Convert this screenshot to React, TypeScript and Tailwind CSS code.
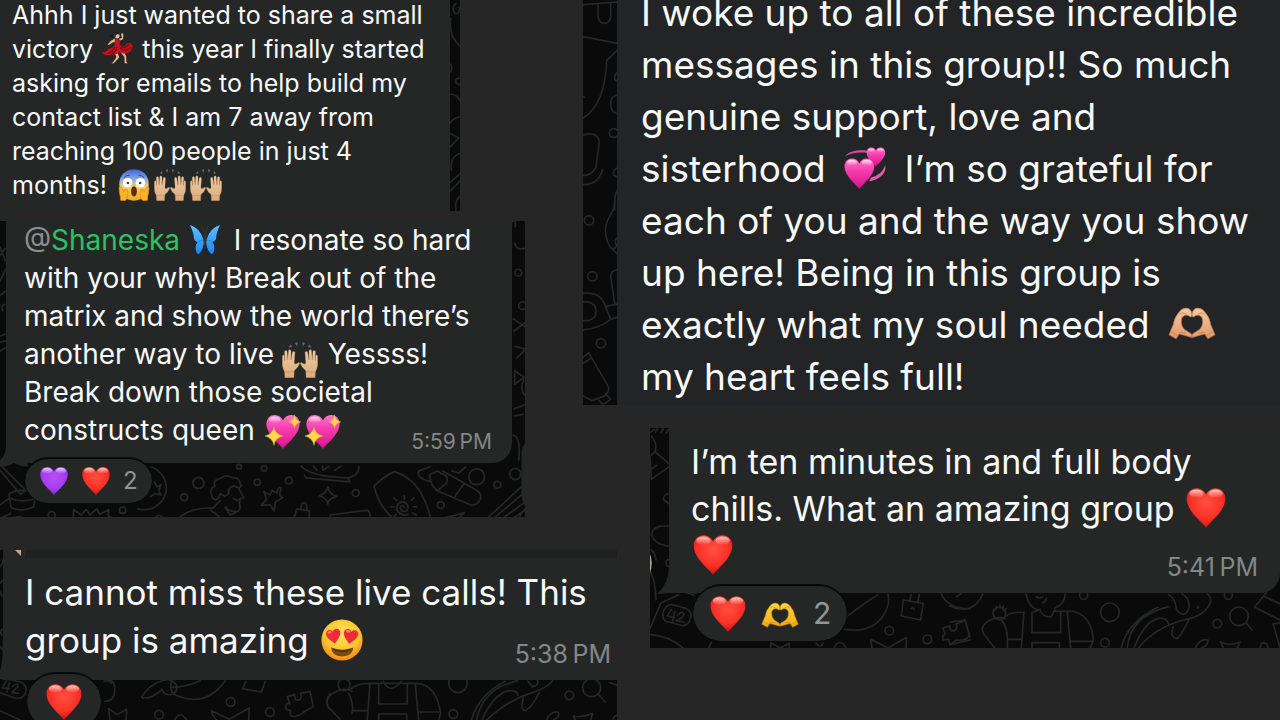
import type { ReactNode } from "react"
import { clsx } from "clsx"

type IconProps = { className?: string }

// Gradients shared by every emoji on the page
function Gradients() {
  return (
    <svg className="absolute h-0 w-0" aria-hidden="true">
      <defs>
        <radialGradient id="red" cx="50%" cy="35%" r="70%">
          <stop offset="0" stopColor="#ff5140" />
          <stop offset=".6" stopColor="#fb3026" />
          <stop offset="1" stopColor="#c90f12" />
        </radialGradient>
        <radialGradient id="purple" cx="50%" cy="35%" r="70%">
          <stop offset="0" stopColor="#b650f5" />
          <stop offset=".6" stopColor="#a63df0" />
          <stop offset="1" stopColor="#7d22cf" />
        </radialGradient>
        <linearGradient id="pink" x1="0" y1="0" x2="0" y2="1">
          <stop offset="0" stopColor="#ff78c6" />
          <stop offset=".4" stopColor="#f73db0" />
          <stop offset="1" stopColor="#d8128a" />
        </linearGradient>
        <linearGradient id="shine" x1="0" y1="0" x2="0" y2="1">
          <stop offset="0" stopColor="#fff" stopOpacity=".75" />
          <stop offset="1" stopColor="#fff" stopOpacity="0" />
        </linearGradient>
        <radialGradient id="face" cx="50%" cy="35%" r="65%">
          <stop offset="0" stopColor="#ffe65c" />
          <stop offset=".65" stopColor="#ffc32e" />
          <stop offset="1" stopColor="#f08a14" />
        </radialGradient>
        <linearGradient id="scream" x1="0" y1="0" x2="0" y2="1">
          <stop offset="0" stopColor="#3d63d8" />
          <stop offset=".3" stopColor="#87a4e6" />
          <stop offset=".55" stopColor="#f5cf62" />
          <stop offset="1" stopColor="#f7a51c" />
        </linearGradient>
        <linearGradient id="skin" x1="0" y1="0" x2="0" y2="1">
          <stop offset="0" stopColor="#efcfa6" />
          <stop offset="1" stopColor="#d9aa7c" />
        </linearGradient>
        <linearGradient id="peach" x1="0" y1="0" x2="0" y2="1">
          <stop offset="0" stopColor="#f6c9a2" />
          <stop offset="1" stopColor="#e29a68" />
        </linearGradient>
        <linearGradient id="gold" x1="0" y1="0" x2="0" y2="1">
          <stop offset="0" stopColor="#ffd63e" />
          <stop offset="1" stopColor="#f3a916" />
        </linearGradient>
        <linearGradient id="wing" x1="0" y1="0" x2="0" y2="1">
          <stop offset="0" stopColor="#63c3ff" />
          <stop offset="1" stopColor="#1a83ea" />
        </linearGradient>
      </defs>
    </svg>
  )
}

const HEART = "M50 97C42 84 4 58 4 28C4 12 15 3 27 3C38 3 46 9 50 18C54 9 62 3 73 3C85 3 96 12 96 28C96 58 58 84 50 97Z"

function Emoji({ className, label, box = "0 0 100 100", children }: IconProps & { label: string; box?: string; children: ReactNode }) {
  return (
    <svg viewBox={box} role="img" aria-label={label} className={clsx("inline-block shrink-0", className)}>
      {children}
    </svg>
  )
}

function RedHeart({ className }: IconProps) {
  return (
    <Emoji label="red heart" className={className}>
      <path d={HEART} fill="url(#red)" />
      <ellipse cx="27" cy="16" rx="17" ry="10" fill="url(#shine)" />
      <ellipse cx="73" cy="16" rx="17" ry="10" fill="url(#shine)" />
    </Emoji>
  )
}

function PurpleHeart({ className }: IconProps) {
  return (
    <Emoji label="purple heart" className={className}>
      <path d={HEART} fill="url(#purple)" />
      <ellipse cx="27" cy="16" rx="17" ry="10" fill="url(#shine)" />
      <ellipse cx="73" cy="16" rx="17" ry="10" fill="url(#shine)" />
    </Emoji>
  )
}

function SparklingHeart({ className }: IconProps) {
  return (
    <Emoji label="sparkling heart" className={className}>
      <path d={HEART} fill="url(#pink)" />
      <ellipse cx="27" cy="16" rx="16" ry="9" fill="url(#shine)" />
      <path d="M25 37Q28 56 50 61Q28 66 25 87Q21 66 0 61Q21 56 25 37Z" fill="#ffd84a" stroke="#e8a22c" strokeWidth="1.5" />
      <path d="M82 3Q84 18 99 22Q84 26 82 40Q80 26 66 22Q80 18 82 3Z" fill="#ffd84a" stroke="#e8a22c" strokeWidth="1.5" />
    </Emoji>
  )
}

function RevolvingHearts({ className }: IconProps) {
  return (
    <Emoji label="revolving hearts" className={className}>
      <path d="M3 22C12 9 35 6 57 9L56 14C34 11 16 14 3 22Z" fill="#d9499f" />
      <path d="M98 43C103 60 86 78 60 82L64 73C82 68 94 58 98 43Z" fill="#e45cb0" />
      <g transform="translate(52 0) scale(.48)">
        <path d={HEART} fill="url(#pink)" />
        <ellipse cx="27" cy="16" rx="16" ry="9" fill="url(#shine)" />
        <ellipse cx="73" cy="16" rx="16" ry="9" fill="url(#shine)" />
      </g>
      <g transform="translate(-2 25) scale(.77)">
        <path d={HEART} fill="url(#pink)" stroke="#b9157c" strokeWidth="1" />
        <ellipse cx="27" cy="16" rx="16" ry="9" fill="url(#shine)" />
        <ellipse cx="73" cy="16" rx="16" ry="9" fill="url(#shine)" />
      </g>
    </Emoji>
  )
}

function HeartEyes({ className }: IconProps) {
  return (
    <Emoji label="smiling face with heart eyes" className={className}>
      <circle cx="50" cy="50" r="49" fill="url(#face)" />
      <path d="M24 68Q50 78 77 68Q76 89 50 89Q25 89 24 68Z" fill="#7a4a12" />
      <path d="M28 71Q50 80 73 71Q72 77 50 79Q29 77 28 71Z" fill="#4d2b08" />
      <g transform="translate(9 27) rotate(-10) scale(.37)">
        <path d={HEART} fill="#ee2b38" />
        <ellipse cx="28" cy="18" rx="14" ry="8" fill="#ff7f7f" />
      </g>
      <g transform="translate(55 21) rotate(10) scale(.37)">
        <path d={HEART} fill="#ee2b38" />
        <ellipse cx="28" cy="18" rx="14" ry="8" fill="#ff7f7f" />
      </g>
    </Emoji>
  )
}

function ScreamFace({ className }: IconProps) {
  return (
    <Emoji label="face screaming in fear" className={className}>
      <path d="M50 1C76 1 96 20 96 47C96 75 80 99 50 99C20 99 4 75 4 47C4 20 24 1 50 1Z" fill="url(#scream)" />
      <path d="M18 27Q26 18 36 20M64 20Q74 18 82 27" fill="none" stroke="#34478c" strokeWidth="3" />
      <circle cx="30" cy="43" r="15" fill="#fff" />
      <circle cx="70" cy="43" r="15" fill="#fff" />
      <circle cx="31" cy="44" r="4" fill="#5c3a1a" />
      <circle cx="69" cy="44" r="4" fill="#5c3a1a" />
      <path d="M50 54C62 54 62 86 50 86C38 86 38 54 50 54Z" fill="#5e2d0c" />
      <path d="M3 58Q10 52 14 62L18 72Q22 59 28 63Q34 72 30 84Q29 98 18 99L8 98Q8 84 5 77Z" fill="#f9b52a" stroke="#d98212" strokeWidth="2" />
      <path d="M97 58Q90 52 86 62L82 72Q78 59 72 63Q66 72 70 84Q71 98 82 99L92 98Q92 84 95 77Z" fill="#f9b52a" stroke="#d98212" strokeWidth="2" />
    </Emoji>
  )
}

const RAISED_HAND =
  "M8 99L7 83Q0 69 1 60L1 40Q2 35 6 37L8 52L7 27Q10 21 14 26L16 49L18 24Q21 18 25 24L25 50L29 28Q33 23 36 29L34 57Q36 65 42 59Q49 54 49 60Q45 72 34 80L33 99Z"

function RaisedHands({ className }: IconProps) {
  return (
    <Emoji label="raising hands" className={className}>
      <path d={RAISED_HAND} fill="url(#skin)" stroke="#a97e55" strokeWidth="1" />
      <path d={RAISED_HAND} transform="matrix(-1 0 0 1 100 0)" fill="url(#skin)" stroke="#a97e55" strokeWidth="1" />
      <path d="M8 83H33M67 83H92M8 52V42M16 50V38M25 50V38M92 52V42M84 50V38M75 50V38" stroke="#b98d62" strokeWidth="1.5" />
      <path d="M17 15L25 6L27 14ZM36 3L44 1L42 12ZM64 3L56 1L58 12ZM83 15L75 6L73 14Z" fill="#686b69" />
    </Emoji>
  )
}

const HALF_HEART_HAND =
  "M2 82L17 91Q21 85 23 80Q35 83 49 88Q52 80 45 77L35 70Q27 62 28 48Q29 35 42 37Q50 45 50 35Q49 21 38 20Q28 20 22 31Q13 42 11 58Z"

function HeartHands({ className, tone }: IconProps & { tone: "peach" | "gold" }) {
  const fill = tone === "peach" ? "url(#peach)" : "url(#gold)"
  const line = tone === "peach" ? "#b97346" : "#c27c0c"
  return (
    <Emoji label="heart hands" className={className}>
      <g transform="translate(0 3) scale(1 .9)">
        <path d={HALF_HEART_HAND} fill={fill} stroke={line} strokeWidth="1.5" />
        <path d={HALF_HEART_HAND} transform="matrix(-1 0 0 1 100 0)" fill={fill} stroke={line} strokeWidth="1.5" />
        <path d="M24 34Q30 28 38 34M76 34Q70 28 62 34M7 75L21 84M93 75L79 84M24 76L37 78M76 76L63 78" fill="none" stroke={line} strokeWidth="1.5" />
      </g>
    </Emoji>
  )
}

function Butterfly({ className }: IconProps) {
  return (
    <Emoji label="butterfly" className={className}>
      <path d="M46 46C40 24 22 9 3 3C7 14 15 27 15 40C15 50 20 55 26 57C17 66 20 86 29 94C39 92 47 72 48 58Z" fill="url(#wing)" stroke="#14263e" strokeWidth="3" />
      <path d="M54 46C60 24 78 9 97 3C93 14 85 27 85 40C85 50 80 55 74 57C83 66 80 86 71 94C61 92 53 72 52 58Z" fill="url(#wing)" stroke="#14263e" strokeWidth="3" />
      <path d="M49 40Q47 18 39 8M51 40Q53 18 61 8" fill="none" stroke="#444" strokeWidth="1.5" />
      <path d="M46 50L28 54M54 50L72 54" stroke="#2379c4" strokeWidth="2" />
      <path d="M50 34Q57 48 50 76Q43 48 50 34Z" fill="#3a3534" />
    </Emoji>
  )
}

function Dancer({ className }: IconProps) {
  return (
    <Emoji label="woman dancing" className={className}>
      <path d="M40 9C34 4 24 10 24 16C30 14 36 18 43 18Z" fill="#231814" />
      <path d="M43 20L30 28L21 39L25 41L36 33L47 31ZM58 27L69 23L70 8L66 2L63 7L65 19L56 22Z" fill="#e2b48b" />
      <circle cx="50" cy="12" r="8" fill="#e8bd95" />
      <path d="M42 15Q41 2 51 2Q59 3 57 8Q50 6 46 10L46 17Z" fill="#231814" />
      <path d="M43 66L48 79L39 92L33 99L41 97L57 80L52 64ZM60 62L73 78L74 98L83 98L79 92L79 76L70 59Z" fill="#e2b48b" />
      <path d="M43 23L58 23L59 39L63 46Q75 45 84 34Q92 32 99 43Q98 60 83 66Q71 69 60 63Q49 72 31 70Q17 78 1 64Q14 65 22 54Q34 52 43 43Z" fill="#c9101d" />
      <path d="M63 46Q78 52 88 38M60 49Q75 64 95 48M43 47Q37 63 20 68M50 47Q48 60 34 68" fill="none" stroke="#7f0711" strokeWidth="4" />
    </Emoji>
  )
}

// Line art behind the chat bubbles
function Doodles({ children }: { children: ReactNode }) {
  return (
    <svg aria-hidden="true" className="pointer-events-none absolute inset-0 h-full w-full" fill="none" stroke="#262727" strokeWidth="5" strokeLinecap="round" strokeLinejoin="round">
      {children}
    </svg>
  )
}

function VictoryDoodles() {
  return (
    <Doodles>
      <g transform="scale(.3333)">
        <path d="M1368 10Q1352 24 1365 40Q1380 44 1378 22M1352 55Q1346 110 1380 138M1350 192Q1360 200 1352 216M1350 282Q1372 284 1380 302M1382 350Q1362 352 1350 370M1350 400L1376 414L1350 442M1382 460Q1350 468 1354 510M1350 548L1382 520M1352 572L1384 540M1384 588Q1364 594 1368 632" />
        <circle cx="1376" cy="244" r="9" />
      </g>
    </Doodles>
  )
}

function ResonateDoodles() {
  return (
    <Doodles>
      <g transform="translate(0 -11) scale(.3444)">
        <path d="M0 108L16 148M0 132L14 112M0 206L18 170M0 248L16 236M14 274Q2 276 8 292M0 366L18 360M0 384L18 380M0 410L16 400M1484 36Q1500 24 1496 48M1494 96Q1500 120 1526 110M1490 316L1526 340M1492 352L1526 326M1496 396L1526 404L1500 430M1494 466L1522 486L1494 506Z" />
        <circle cx="1505" cy="182" r="10" />
        <circle cx="1517" cy="278" r="11" />
      </g>
      <g transform="translate(0 159) scale(.3444)">
        <path d="M0 246L75 320L60 332L0 262" />
        <path d="M26 330Q64 310 104 332L98 368Q64 386 32 370ZM30 344Q64 358 102 344M0 362L26 344M36 400L60 396L78 410M0 402L30 388" />
        <circle cx="150" cy="392" r="10" />
        <circle cx="356" cy="378" r="9" />
        <path d="M212 408L214 376L236 392L250 376L262 392L280 374L290 390L316 376L314 394L340 408" />
        <path d="M438 252A62 62 0 1 1 400 374" />
        <path d="M448 296L456 310L468 304L460 322L468 334L450 330L438 338" />
        <circle cx="462" cy="408" r="14" />
        <circle cx="535" cy="340" r="10" />
        <circle cx="576" cy="299" r="16" />
        <path d="M616 340Q606 314 624 308Q618 288 640 286Q654 272 674 284Q696 282 698 302Q704 308 694 314L680 308Q662 308 664 330L652 338L640 330L634 344Q622 352 616 340ZM694 316L708 342L694 346Q700 352 694 358Q702 372 690 382Q664 384 654 368M678 344L690 350M640 350L618 372Q550 368 508 410M612 378Q634 392 648 410M654 370L668 392L682 386M718 408Q758 392 800 408" />
        <circle cx="694" cy="252" r="7" />
        <circle cx="747" cy="297" r="9" />
        <circle cx="767" cy="256" r="8" />
        <circle cx="839" cy="292" r="10" />
        <path d="M790 320L804 328Q808 306 816 314L812 334L820 342L800 354L796 380L784 362L758 364L774 346L766 324L784 334Z" />
        <path d="M952 310Q956 332 978 338Q956 342 952 360Q948 342 928 336Q948 330 952 310Z" />
        <path d="M862 374L898 380L898 408M862 374L852 406M874 374Q874 356 884 356Q894 360 890 378M874 250Q900 280 1010 284L1016 296L888 284L884 276M910 250L920 262M936 250L938 262L956 250M972 262L990 250M1010 284Q1044 276 1042 252M958 408L960 392L1068 378Q1078 386 1072 408" />
        <circle cx="1033" cy="328" r="10" />
        <path d="M1086 308Q1112 282 1144 266Q1198 282 1224 332Q1248 374 1250 410M1086 308Q1102 374 1150 408M1174 370Q1168 360 1162 370Q1164 386 1180 380Q1192 362 1172 354Q1150 354 1152 376Q1162 396 1186 390" />
        <path d="M1174 346V336M1194 350L1202 342M1202 368H1210M1198 386L1208 392M1174 402V410M1150 390L1144 398M1144 368H1134M1152 350L1144 342" />
        <path d="M1216 264L1250 252M1216 264Q1208 286 1252 296M1252 296Q1240 270 1260 270Q1270 258 1280 272Q1306 276 1296 300L1272 320Q1254 312 1252 296ZM1286 264L1384 320Q1406 336 1388 356Q1376 368 1360 360L1266 320M1348 300L1320 340M1312 264L1332 270L1352 252" />
        <circle cx="1384" cy="281" r="23" />
        <circle cx="1444" cy="304" r="10" />
        <circle cx="1496" cy="273" r="16" />
        <circle cx="1280" cy="363" r="10" />
        <path d="M1290 400L1348 386L1322 410ZM1408 408L1516 308M1426 408L1516 332M1450 408L1520 358M1480 408L1524 378M1524 374L1500 410M1492 84L1524 72M1494 104L1518 100M1490 160Q1514 168 1506 232M1520 0Q1508 30 1526 46" />
        <path d="M1528 182Q1514 190 1514 220V320Q1512 350 1528 372Z" fill="#252727" stroke="none" />
        <path d="M18 150V190Q16 222 0 232V252Q30 250 40 240Q55 250 80 252V150Z" fill="#242726" stroke="none" />
      </g>
    </Doodles>
  )
}

function LiveCallDoodles() {
  return (
    <Doodles>
      <g transform="translate(0 -10) scale(.3333)">
        <path d="M0 80Q10 70 8 60M0 130L8 120M0 156L8 170M6 268Q-2 276 6 286M0 318L8 330" />
        <path d="M16 416L62 426Q84 438 76 460Q66 480 44 474L0 458M20 422L6 444L28 446M28 428L20 456M38 440Q54 424 54 440L36 458L56 460M0 512L60 540" />
        <path d="M312 424Q346 412 344 450Q344 484 314 484M298 412Q330 420 334 430" />
        <path d="M326 506L330 540M326 506L352 524L380 508L378 540M426 470Q446 436 482 424Q512 410 530 436Q534 456 514 464Q490 466 486 448Q458 476 428 474ZM516 420Q508 440 518 460M516 460Q612 510 676 422M518 442Q562 440 600 422" />
        <path d="M738 424L728 446L784 456L796 424" />
        <circle cx="692" cy="486" r="13" />
        <circle cx="477" cy="524" r="13" />
        <circle cx="810" cy="516" r="13" />
        <path d="M524 540Q540 510 560 540M634 512Q636 526 650 540M634 512L688 538L748 504L746 540" />
        <path d="M862 470L884 464Q882 484 898 480Q908 472 902 460L930 454L940 500L926 508L914 514Q904 526 882 530Q866 530 872 512Q852 510 858 494Q866 486 870 492ZM990 460Q974 482 986 506" />
      </g>
      <g transform="translate(320 -10) scale(.3333)">
        <circle cx="72" cy="434" r="18" />
        <path d="M96 454Q72 440 42 458Q14 474 24 500L60 538M86 460Q102 490 96 520M90 448Q110 430 150 430H290Q350 434 362 520L356 540M150 432L142 540M286 432L296 540M176 432V492H262V432M190 424Q210 466 244 424M176 540V522H260V540M100 512H142M294 516H362" />
        <circle cx="414" cy="430" r="28" />
        <circle cx="400" cy="522" r="13" />
        <path d="M454 540Q478 462 556 424M470 540Q480 474 544 438L592 422M486 540Q512 478 552 456Q590 444 594 466M500 540Q560 484 620 464Q684 444 698 422M624 424Q642 446 638 440Q658 436 652 422M610 474Q600 510 616 512Q638 500 658 458" />
        <circle cx="748" cy="466" r="13" />
        <circle cx="815" cy="443" r="27" />
        <path d="M834 462L856 486M868 428L892 436M680 540Q690 514 714 516Q724 528 700 540M760 528Q790 534 818 520L812 540M760 528L766 540M878 540Q882 524 896 526" />
      </g>
      <g transform="translate(0 -10) scale(.3333)">
        <path d="M8 300V340Q6 380 0 392V418Q26 418 40 410Q55 420 80 421V300Z" fill="#242726" stroke="none" />
      </g>
    </Doodles>
  )
}

function GratefulDoodles() {
  return (
    <Doodles>
      <g transform="translate(-13 0) scale(.3333)">
        <path d="M40 14L142 6M84 12V50Q88 72 106 70Q122 66 122 48V10M40 110L142 130M142 150L110 182Q106 310 40 354M142 284Q120 290 122 316Q124 336 142 342M40 404Q84 394 88 426L78 500Q66 528 40 526M98 508Q86 554 40 554M142 570Q132 590 134 630M38 290L44 292" />
        <path d="M142 218Q134 222 134 232T142 244M142 504Q130 508 130 518T142 530" />
        <circle cx="131" cy="399" r="13" />
      </g>
      <g transform="translate(-13 200) scale(.3333)">
        <circle cx="57" cy="61" r="14" />
        <circle cx="67" cy="229" r="14" />
        <circle cx="93" cy="430" r="14" />
        <path d="M134 0Q136 22 122 44Q92 90 120 140L142 162M142 112Q130 124 142 138M130 148L142 136M142 210Q122 212 122 228L134 310M40 280Q92 274 106 318L122 358Q90 384 40 390M106 320L142 312M122 358L142 352" />
        <path d="M40 306Q78 304 78 334T40 362M40 472L56 458L116 562Q118 586 92 592L66 602L40 588M40 490L64 474M106 580L122 598L100 614L86 600" />
      </g>
    </Doodles>
  )
}

function ChillsDoodles() {
  return (
    <Doodles>
      <g transform="translate(-10 -8) scale(.3333)">
        <path d="M30 38L44 28M46 38L52 26M62 38L70 26M78 40L86 28M34 48Q54 72 44 96L30 108M46 96L88 132M30 110L34 178L88 140M88 220Q66 226 72 240L88 252M30 150L50 136M88 318Q40 314 36 340Q34 358 60 372L88 380M88 418Q76 420 78 430T88 440M30 452Q46 480 48 540M34 390Q46 400 48 420" />
        <path d="M72 570Q84 548 104 556L140 566Q158 578 152 594Q144 622 122 616L78 604Q62 594 72 570ZM94 568L82 588L104 592M104 574L98 604M112 586Q126 570 132 582Q132 592 108 602L132 606M30 626L62 550L116 524M30 644Q90 648 128 684M206 684L214 668M124 512L162 526" />
        <path d="M614 628Q690 640 728 590Q752 556 744 522M620 590L680 546L714 524" />
        <path d="M790 540L850 550L842 600L784 588ZM808 542L814 524M834 546L838 524M814 566Q818 560 822 568M904 522Q924 566 990 566M392 684V668L420 684L448 670V684M528 670Q540 686 550 670M582 684Q600 650 618 684M692 658L696 684M692 658L744 684M744 684L800 652L798 684" />
        <circle cx="748" cy="632" r="13" />
        <circle cx="862" cy="658" r="13" />
        <path d="M908 624L930 618Q928 636 944 632Q954 624 948 612L976 602L990 650M908 624L916 642Q904 648 910 660L926 658L930 674L990 660" />
        <path d="M28 396Q42 428 28 466Z" fill="#b9ad96" stroke="none" />
        <path d="M87 420V440Q86 490 52 522Q90 522 118 507Q134 520 170 522V420Z" fill="#242726" stroke="none" />
      </g>
      <g transform="translate(300 -8) scale(.3333)">
        <path d="M0 558Q70 588 98 522M20 530L34 520M0 606L38 602L44 598L58 646Q50 664 20 660L0 674" />
        <circle cx="148" cy="580" r="19" />
        <path d="M140 560L136 570M150 556V564M160 558L158 566M168 566L162 572M166 596Q138 586 108 608Q88 624 104 646L134 684M156 602Q176 626 172 684M168 588Q182 576 222 576M222 576L214 684M228 522Q240 570 270 570Q280 594 304 590L316 564Q344 552 346 522M258 530Q268 538 278 530M288 534Q290 544 278 548M246 578V638H332V578M246 684V668H328V684M316 574H370Q428 590 430 664L420 684M352 574L362 684M172 658H214M362 664H430M270 568L246 578" />
        <circle cx="401" cy="526" r="12" />
        <circle cx="480" cy="577" r="28" />
        <circle cx="465" cy="668" r="13" />
        <path d="M514 684Q532 606 624 562M532 684Q540 588 656 560M552 684Q584 606 622 596Q648 590 656 612M566 684Q610 626 700 600Q770 588 782 544Q782 524 770 522M656 524Q676 534 680 570Q706 600 718 560Q716 530 696 522M670 620Q658 654 682 656Q700 636 716 600" />
        <circle cx="744" cy="562" r="2" />
        <circle cx="835" cy="526" r="12" />
        <circle cx="802" cy="611" r="13" />
        <circle cx="867" cy="589" r="28" />
        <path d="M888 608L906 630M950 516L914 562L990 600M946 530L990 552M970 612L990 684M990 608L970 612M736 684Q750 654 774 660Q776 676 754 684M812 666Q840 680 870 666L862 684M812 666L820 684M930 684Q932 666 942 668T954 684" />
      </g>
    </Doodles>
  )
}

function Reactions({ className, count, children }: IconProps & { count?: number; children: ReactNode }) {
  return (
    <button
      type="button"
      className={clsx("relative flex items-center rounded-full border-t border-black bg-[#242726] text-[#939594] outline outline-[#0a0a0a]", className)}
    >
      {children}
      {count && <span>{count}</span>}
    </button>
  )
}

function Panel({ className, children }: IconProps & { children: ReactNode }) {
  return <article className={clsx("relative overflow-hidden bg-[#0a0a0a]", className)}>{children}</article>
}

export default function App() {
  return (
    <main className="flex h-screen items-start overflow-hidden bg-[#262626] font-['Inter',sans-serif] text-[#f7f8f8]">
      <Gradients />

      {/* Left column */}
      <section className="flex h-full w-[45.55%] shrink-0 flex-col">
        <Panel className="mb-2.5 w-[460px] shrink-0">
          <VictoryDoodles />
          <div className="relative mr-2.5 bg-[#242726] pb-[9px] pl-3">
            <p className="-mt-0.5 text-[25px] leading-[34px] whitespace-nowrap">
              Ahhh I just wanted to share a small
              <br />
              victory <Dancer className="-mt-1.5 mr-0.5 ml-px size-8" /> this year I finally started
              <br />
              asking for emails to help build my
              <br />
              contact list &amp; I am 7 away from
              <br />
              reaching 100 people in just 4
              <br />
              months! <ScreamFace className="-mt-1 ml-1 size-8" />
              <RaisedHands className="-mt-1 ml-1 size-8" />
              <RaisedHands className="-mt-1 ml-1 size-8" />
            </p>
          </div>
        </Panel>

        <Panel className="mb-[33px] w-[525px] shrink-0 pb-3.5">
          <ResonateDoodles />
          <div className="relative mr-[13px] ml-1.5 rounded-br-[20px] bg-[#242726] pb-3.5 pl-[18px]">
            <p className="text-[28px] leading-[38px] whitespace-nowrap">
              <a href="#shaneska" className="text-[#2fc062]">
                <span className="text-[#8d8f8e]">@</span>Shaneska
              </a>{" "}
              <Butterfly className="-mt-2 -mb-1 mr-1 size-[34px]" /> I resonate so hard
              <br />
              with your why! Break out of the
              <br />
              matrix and show the world there’s
              <br />
              another way to live <RaisedHands className="mr-0.5 -mb-2 size-9" /> Yessss!
              <br />
              Break down those societal
              <br />
              constructs queen <SparklingHeart className="-my-1 ml-0.5 size-9" />
              <SparklingHeart className="-my-1 ml-1 size-9" />
            </p>
            <time className="absolute right-5 bottom-[7px] text-[21px] leading-7 text-[#848786]">5:59&#8239;PM</time>
          </div>
          <Reactions count={2} className="-mt-[5px] ml-[25px] h-[45px] gap-3 px-3.5 text-[24px]">
            <PurpleHeart className="size-[30px]" />
            <RedHeart className="size-[30px]" />
          </Reactions>
        </Panel>

        <Panel className="-mr-[34px] flex-1">
          <LiveCallDoodles />
          <div className="relative ml-[3px] bg-[#242726] pb-4 pl-[22px]">
            <div className="h-2 bg-[#1e2120]">
              <svg viewBox="0 0 6 6" className="-ml-2.5 size-1.5" aria-hidden="true">
                <path d="M0 0H6V6Z" fill="#c9a584" />
              </svg>
            </div>
            <p className="mt-2.5 text-[35px] leading-[48px] whitespace-nowrap">
              I cannot miss these live calls! This
              <br />
              group is amazing <HeartEyes className="-mt-1.5 ml-0.5 size-[42px]" />
            </p>
            <time className="absolute right-1.5 bottom-2.5 text-[25px] leading-8 text-[#848786]">5:38&#8239;PM</time>
          </div>
          <Reactions className="-mt-[7px] ml-[27px] h-14 px-[18px]">
            <RedHeart className="size-[38px]" />
          </Reactions>
        </Panel>
      </section>

      {/* Right column */}
      <section className="flex min-w-0 flex-1 flex-col">
        <Panel className="mb-[23px]">
          <GratefulDoodles />
          <div className="relative ml-[34px] bg-[#222425] pb-0.5 pl-6">
            <p className="-mt-[13px] text-[37px] leading-[52px] whitespace-nowrap">
              I woke up to all of these incredible
              <br />
              messages in this group!! So much
              <br />
              genuine support, love and
              <br />
              sisterhood <RevolvingHearts className="-mt-2 mr-2 ml-2 size-[42px]" /> I’m so grateful for
              <br />
              each of you and the way you show
              <br />
              up here! Being in this group is
              <br />
              exactly what my soul needed <HeartHands tone="peach" className="-mt-3 ml-2 size-12" />
              <br />
              my heart feels full!
            </p>
          </div>
        </Panel>

        <Panel className="ml-[67px] pb-[7px]">
          <ChillsDoodles />
          <div className="relative ml-[19px] rounded-br-[20px] bg-[#242726] pt-2.5 pb-3.5 pl-[22px]">
            <p className="text-[34px] leading-[47px] whitespace-nowrap">
              I’m ten minutes in and full body
              <br />
              chills. What an amazing group <RedHeart className="-mt-2 ml-px size-[42px]" />
              <br />
              <RedHeart className="-mt-2 ml-px size-[42px]" />
            </p>
            <time className="absolute right-[22px] bottom-2.5 text-[25px] leading-8 text-[#848786]">5:41&#8239;PM</time>
          </div>
          <Reactions count={2} className="-mt-2 ml-[43px] h-14 gap-3.5 px-4 text-[30px]">
            <RedHeart className="size-[38px]" />
            <HeartHands tone="gold" className="size-[38px]" />
          </Reactions>
        </Panel>
      </section>
    </main>
  )
}
